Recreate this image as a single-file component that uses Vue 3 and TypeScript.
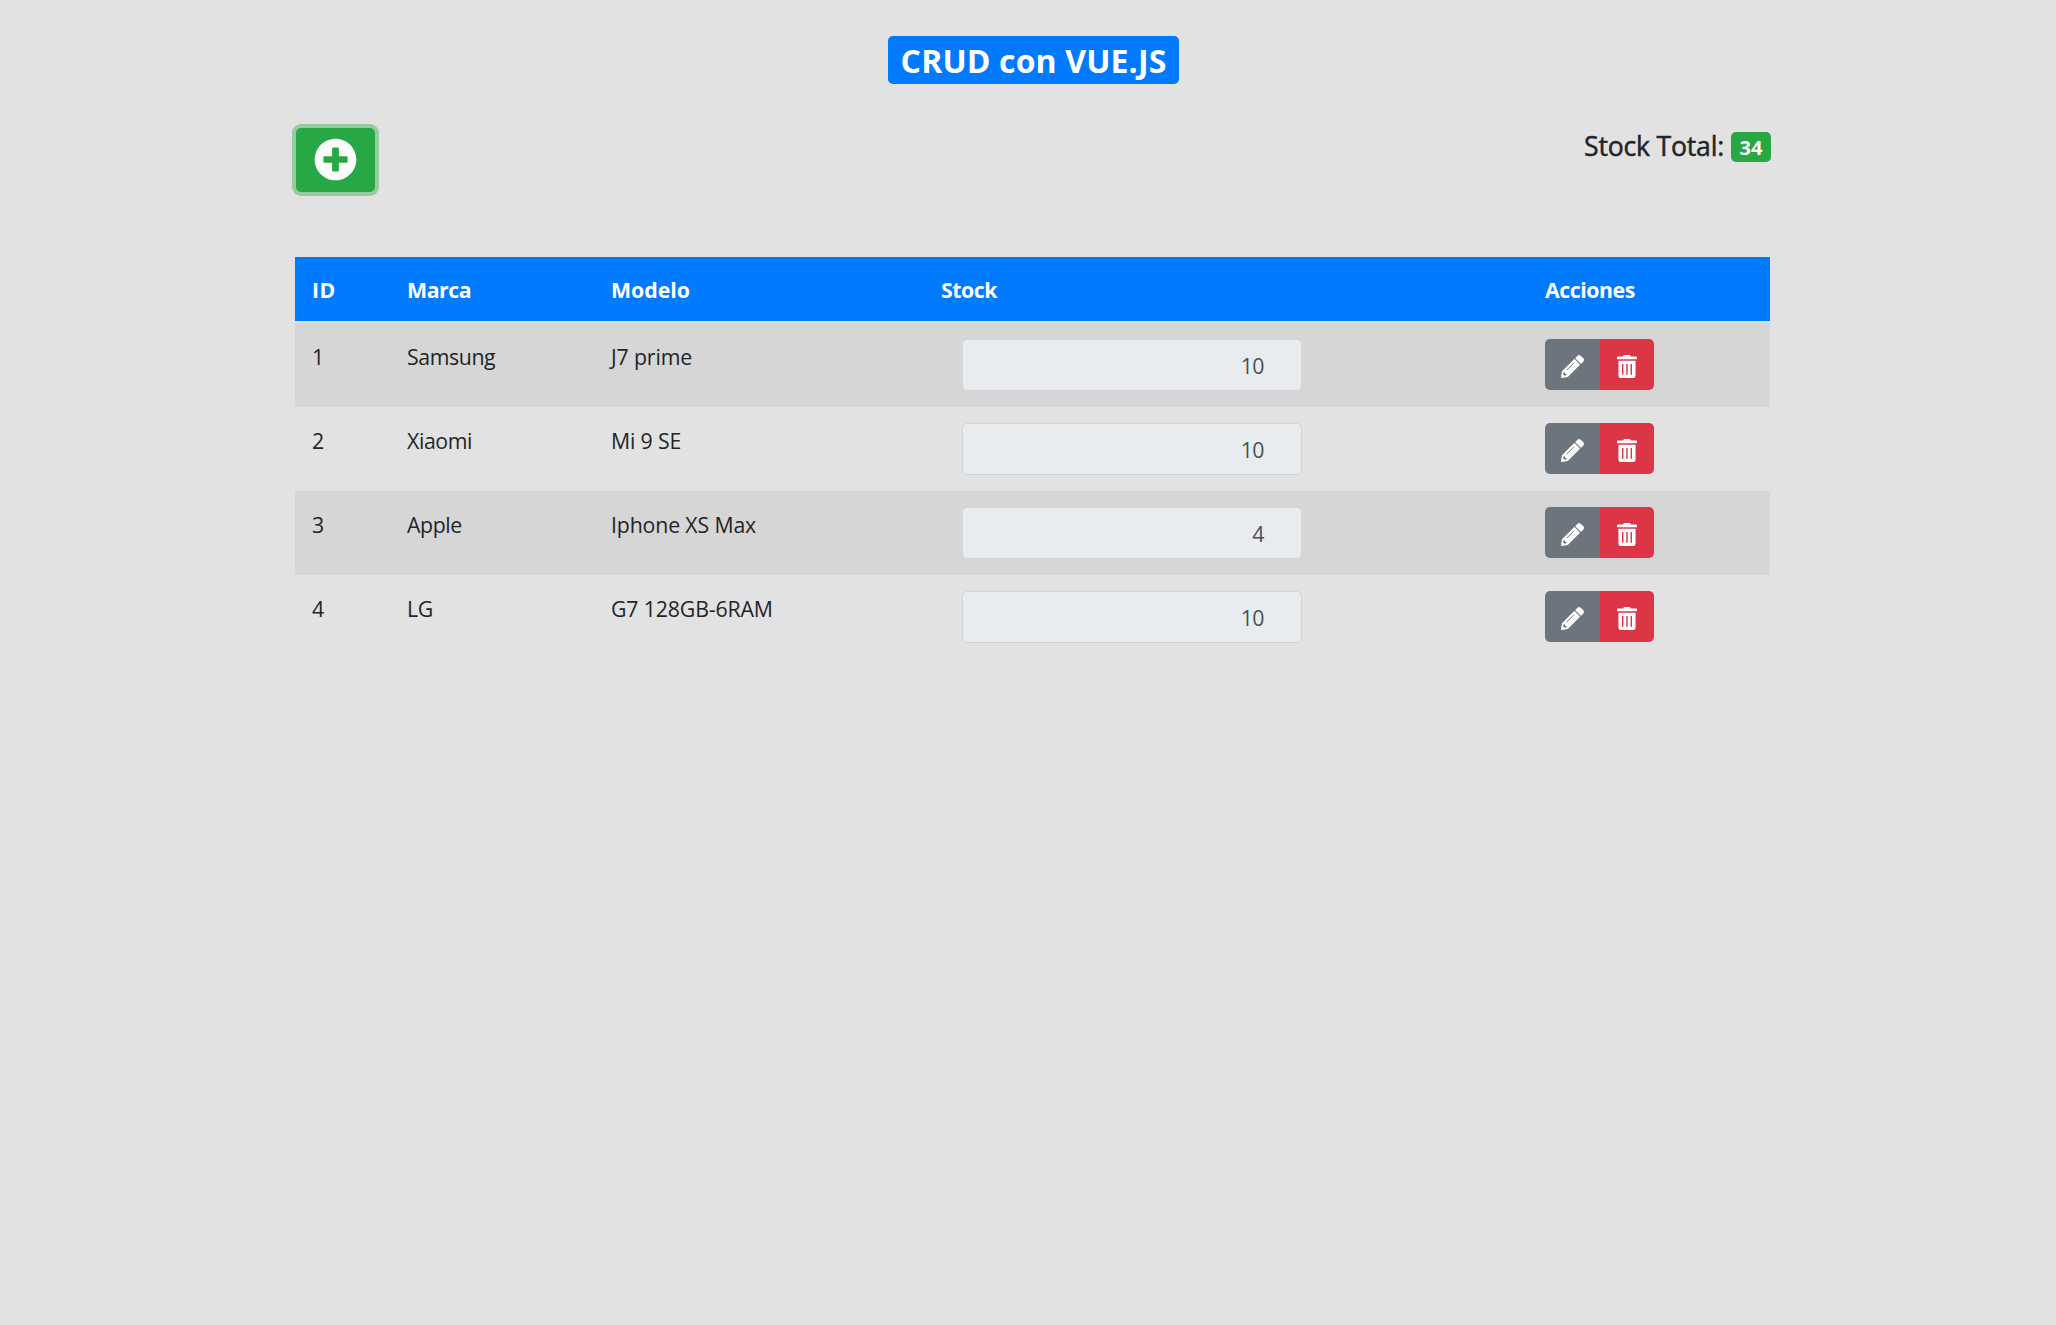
<script setup lang="ts">
import { computed, ref } from 'vue'

interface Movil {
  id: number
  marca: string
  modelo: string
  stock: number
}

const moviles = ref<Movil[]>([
  { id: 1, marca: 'Samsung', modelo: 'J7 prime', stock: 10 },
  { id: 2, marca: 'Xiaomi', modelo: 'Mi 9 SE', stock: 10 },
  { id: 3, marca: 'Apple', modelo: 'Iphone XS Max', stock: 4 },
  { id: 4, marca: 'LG', modelo: 'G7 128GB-6RAM', stock: 10 },
])

const total = computed(() => moviles.value.reduce((sum, m) => sum + m.stock, 0))
</script>

<template>
  <main class="page">
    <header class="heading">
      <h1 class="title">CRUD con VUE.JS</h1>
    </header>
    <section class="toolbar">
      <button class="add" title="Nuevo">
        <svg viewBox="0 0 512 512"><path fill="#fff" d="M256 8C119 8 8 119 8 256s111 248 248 248 248-111 248-248S393 8 256 8zm144 276c0 6.600-5.400 12-12 12h-92v92c0 6.600-5.400 12-12 12h-56c-6.600 0-12-5.400-12-12v-92h-92c-6.600 0-12-5.400-12-12v-56c0-6.600 5.400-12 12-12h92v-92c0-6.600 5.400-12 12-12h56c6.600 0 12 5.400 12 12v92h92c6.600 0 12 5.400 12 12v56z"/></svg>
      </button>
      <h5 class="total"><span class="label">Stock Total:</span><span class="count">{{ total }}</span></h5>
    </section>
    <table class="grid">
      <colgroup><col class="c1"><col class="c2"><col class="c3"><col class="c4"><col class="c5"></colgroup>
      <thead>
        <tr><th class="id">ID</th><th>Marca</th><th class="model">Modelo</th><th>Stock</th><th>Acciones</th></tr>
      </thead>
      <tbody>
        <tr v-for="m in moviles" :key="m.id">
          <td>{{ m.id }}</td>
          <td class="brand">{{ m.marca }}</td>
          <td class="model">{{ m.modelo }}</td>
          <td><div class="field">{{ m.stock }}</div></td>
          <td>
            <div class="group">
              <button class="edit" title="Editar">
                <svg viewBox="0 0 512 512">
                  <path fill="#fff" d="M497.900 142.100l-46.100 46.100c-4.700 4.700-12.300 4.700-17 0l-111-111c-4.700-4.700-4.700-12.300 0-17l46.100-46.100c18.700-18.700 49.100-18.700 67.900 0l60.100 60.100c18.800 18.700 18.800 49.100 0 67.900zM290 94L21.600 362.400.4 483.900c-2.900 16.400 11.400 30.600 27.800 27.800l121.500-21.300L418 222c4.700-4.700 4.700-12.300 0-17L307 94c-4.800-4.700-12.400-4.700-17 0z"/>
                  <path fill="none" stroke="#6c757d" stroke-width="22" stroke-linecap="round" d="M134 330L288 176"/>
                  <path fill="#6c757d" d="M58 390h34v32h30v30l-42 12-34-34z"/>
                </svg>
              </button>
              <button class="remove" title="Borrar">
                <svg viewBox="0 0 448 512"><path fill="#fff" d="M32 464a48 48 0 0 0 48 48h288a48 48 0 0 0 48-48V128H32zm272-256a16 16 0 0 1 32 0v224a16 16 0 0 1-32 0zm-96 0a16 16 0 0 1 32 0v224a16 16 0 0 1-32 0zm-96 0a16 16 0 0 1 32 0v224a16 16 0 0 1-32 0zM432 32H312l-9.400-18.700A24 24 0 0 0 281.100 0H166.800a23.700 23.700 0 0 0-21.400 13.300L136 32H16A16 16 0 0 0 0 48v32a16 16 0 0 0 16 16h416a16 16 0 0 0 16-16V48a16 16 0 0 0-16-16z"/></svg>
              </button>
            </div>
          </td>
        </tr>
      </tbody>
    </table>
  </main>
</template>

<style>
body {
  background: #e2e2e2;
}
</style>

<style scoped>
* {
  box-sizing: border-box;
}
.page {
  width: 1475px;
  margin-left: 295px;
  padding-top: 36px;
  font-family: 'Open Sans', 'Noto Sans', sans-serif;
  color: #212529;
}
.heading {
  display: flex;
  justify-content: center;
  padding-left: 2px;
}
.title {
  margin: 0;
  width: 291px;
  height: 48px;
  border-radius: 5px;
  background: #007bff;
  color: #fff;
  font-size: 32px;
  line-height: 50px;
  letter-spacing: 0.15px;
  font-weight: 700;
  text-align: center;
  white-space: nowrap;
}
.toolbar {
  display: flex;
  justify-content: space-between;
  align-items: flex-start;
  width: 1475px;
  height: 129px;
  margin-top: 44px;
  margin-left: 1px;
}
button {
  display: flex;
  align-items: center;
  justify-content: center;
  padding: 0;
  border: 0;
}
.add {
  width: 79px;
  height: 64px;
  border-radius: 5px;
  background: #28a745;
  box-shadow: 0 0 0 4px #97cba3;
}
.add svg {
  width: 43px;
  height: 43px;
  margin-top: -2px;
}
.total {
  display: flex;
  align-items: flex-start;
  gap: 7px;
  margin: 4px 0 0;
  font-size: 26.6px;
  line-height: 30px;
  font-weight: 500;
}
.label {
  line-height: 28px;
  letter-spacing: -0.2px;
  -webkit-text-stroke: 0.5px #212529;
}
.count {
  width: 40px;
  height: 30px;
  border-radius: 5px;
  background: #28a745;
  color: #fff;
  font-size: 20px;
  line-height: 31px;
  font-weight: 700;
  text-align: center;
}
.grid {
  width: 1475px;
  table-layout: fixed;
  border-collapse: separate;
  border-spacing: 0;
  font-size: 21.3px;
}
.c1 { width: 96px; }
.c2 { width: 204px; }
.c3 { width: 330px; }
.c4 { width: 604px; }
th {
  height: 66px;
  padding: 17px 0 0 16px;
  border-bottom: 2px solid #cfe4f8;
  background: #007bff;
  color: #fff;
  line-height: 32px;
  letter-spacing: -0.45px;
  text-align: left;
  vertical-align: top;
}
th.id {
  letter-spacing: 0.5px;
}
th.model {
  letter-spacing: 0;
}
td {
  height: 84px;
  padding: 16px 0 0 16px;
  line-height: 36px;
  vertical-align: top;
}
th:first-child,
td:first-child {
  padding-left: 17px;
}
.brand {
  letter-spacing: -0.4px;
}
td.model {
  letter-spacing: -0.15px;
}
tbody tr:nth-child(odd) {
  background: #d6d6d6;
}
.field {
  width: 340px;
  height: 52px;
  margin-left: 21px;
  padding-right: 37px;
  border: 1px solid #ced4da;
  border-radius: 5px;
  background: #e9ecef;
  color: #495057;
  line-height: 52px;
  letter-spacing: -0.5px;
  text-align: right;
}
tbody tr:nth-child(odd) .field {
  border-color: #d2d6da;
}
.group {
  display: flex;
}
.edit {
  width: 55px;
  height: 51px;
  border-radius: 5px 0 0 5px;
  background: #6c757d;
}
.remove {
  width: 54px;
  height: 51px;
  border-radius: 0 5px 5px 0;
  background: #dc3545;
}
.edit svg {
  width: 23px;
  height: 23px;
  margin-top: 3px;
}
.remove svg {
  width: 20px;
  height: 23px;
  margin-top: 3px;
}
</style>
